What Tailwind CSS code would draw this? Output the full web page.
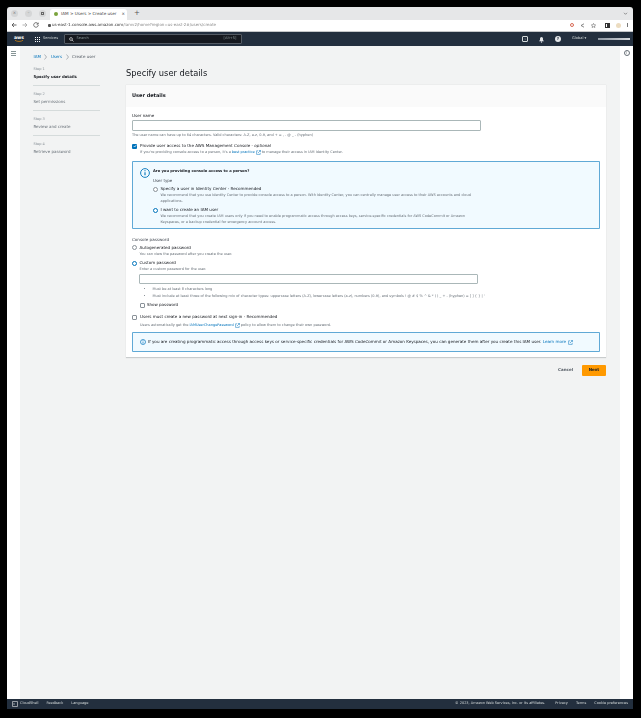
<!DOCTYPE html>
<html><head><meta charset="utf-8"><script src="https://cdn.jsdelivr.net/npm/@tailwindcss/browser@4"></script></head>
<body class="bg-black w-[641px] h-[718px] overflow-hidden font-['DejaVu_Sans',sans-serif]">
<div class="ml-[7px] pt-[7px] w-[626px] h-[709px]">
<div class="w-[626px] h-[702px] flex flex-col rounded-t-[3px] overflow-hidden blur-[0.3px]">
  <!-- tab strip -->
  <div class="h-[12.500px] bg-[#e6e7e8] flex items-center relative shrink-0">
    <div class="flex ml-[4px] gap-[7px] text-[#777] text-[4px] items-center">
      <span class="size-[7px] rounded-full bg-[#d5d6d7] flex items-center justify-center leading-none">×</span>
      <span class="size-[7px] rounded-full bg-[#d5d6d7] flex items-center justify-center leading-none">–</span>
      <span class="size-[7px] rounded-full bg-[#d5d6d7] flex items-center justify-center"><span class="size-[3px] border-[0.5px] border-[#666]"></span></span>
    </div>
    <div class="ml-[4px] w-[77px] h-[10.500px] mt-[2px] bg-white rounded-t-[3px] flex items-center pl-[4px] gap-[3px] text-[4.150px] text-[#444]">
      <span class="size-[4px] rounded-full bg-[#7aa33c] shrink-0"></span><span class="whitespace-nowrap flex-1">IAM &gt; Users &gt; Create user</span><span class="mr-[2px]">×</span>
    </div>
    <span class="ml-[7px] text-[7px] leading-none text-[#555]">+</span>
    <svg class="ml-auto mr-[5px]" width="5" height="5" viewBox="0 0 5 5"><path d="M1 1.800 2.500 3.300 4 1.800" fill="none" stroke="#666" stroke-width=".7"/></svg>
  </div>
  <!-- address bar -->
  <div class="h-[12.500px] bg-white border-b border-[#c5c7c9] flex items-center shrink-0 relative">
    <div class="flex items-center ml-[4px] gap-[5px]">
      <svg width="6" height="6" viewBox="0 0 6 6"><path d="M5.500 3H1M3 1 1 3l2 2" fill="none" stroke="#555" stroke-width=".9"/></svg>
      <svg width="6" height="6" viewBox="0 0 6 6"><path d="M.5 3H5M3 1l2 2-2 2" fill="none" stroke="#aaa" stroke-width=".9"/></svg>
      <svg width="6" height="6" viewBox="0 0 6 6"><path d="M5 1.800A2.300 2.300 0 1 0 5.300 3M5.200.6v1.600H3.600" fill="none" stroke="#555" stroke-width=".8"/></svg>
    </div>
    <span class="ml-[8.500px] size-[3px] rounded-[1px] bg-[#555]"></span>
    <span class="ml-[1.500px] text-[4px] text-[#333] whitespace-nowrap">us-east-1.console.aws.amazon.com<span class="text-[#8a8a8a]">/iamv2/home?region=us-east-2#/users/create</span></span>
    <div class="ml-auto flex items-center mr-[5.500px] gap-[6px]">
      <span class="size-[4px] rounded-full border border-[#d96a55]"></span>
      <svg width="5" height="5" viewBox="0 0 5 5"><path d="M4 .8 1 2.500 4 4.200" fill="none" stroke="#555" stroke-width=".7"/></svg>
      <svg width="5" height="5" viewBox="0 0 10 10"><path d="m5 .8 1.300 2.900 3.100.3-2.400 2 .8 3.100L5 7.500 2.200 9.100 3 6 .6 4l3.100-.3z" fill="none" stroke="#555"/></svg>
      <span class="size-[5px] border border-[#333] border-r-[3px] ml-[3px]"></span>
      <span class="size-[5px] rounded-full bg-[#ecdcc0]"></span>
      <span class="w-[1px] h-[4px] bg-[#777]"></span>
    </div>
  </div>
  <!-- aws nav -->
  <div class="h-[14px] bg-[#232f3e] flex items-center shrink-0 text-white">
    <div class="w-[14px] ml-[5px] flex flex-col items-center text-[4.600px] leading-[4px] font-bold">aws<svg width="10" height="2" viewBox="0 0 10 2" class="-mt-[0.5px]"><path d="M1 .3C3 1.800 7 1.800 9 .3" stroke="#f90" stroke-width=".6" fill="none"/></svg></div>
    <div class="ml-[9px] grid grid-cols-3 gap-[1px] w-[5px]">
      <span class="size-[1px] bg-white"></span><span class="size-[1px] bg-white"></span><span class="size-[1px] bg-white"></span><span class="size-[1px] bg-white"></span><span class="size-[1px] bg-white"></span><span class="size-[1px] bg-white"></span><span class="size-[1px] bg-white"></span><span class="size-[1px] bg-white"></span><span class="size-[1px] bg-white"></span>
    </div>
    <span class="ml-[3px] w-[16px] text-[3.600px] text-[#d5dbdb] whitespace-nowrap">Services</span>
    <div class="ml-[4.500px] w-[178px] h-[10px] bg-[#16191f] border-[0.5px] border-[#545b64] rounded-[1px] flex items-center px-[4px] text-[3.600px] text-[#879596]">
      <svg width="5" height="5" viewBox="0 0 5 5"><circle cx="2" cy="2" r="1.400" fill="none" stroke="#fff" stroke-width=".6"/><path d="m3 3 1.500 1.500" stroke="#fff" stroke-width=".6"/></svg>
      <span class="ml-[3px]">Search</span><span class="ml-auto">[Alt+S]</span>
    </div>
    <div class="ml-auto flex items-center">
      <span class="size-[6px] border border-[#d5dbdb] rounded-[1px] mr-[10px] text-[3px] leading-none flex items-center justify-center">›</span>
      <svg width="7" height="7" viewBox="0 0 7 7" class="mr-[10px]"><path d="M1 5.300h5L5 4V2.600a1.500 1.500 0 0 0-3 0V4z" fill="#e5e7ea"/><circle cx="3.500" cy="6" r=".7" fill="#e5e7ea"/></svg>
      <span class="size-[6px] rounded-full bg-[#e5e7ea] mr-[11px] flex items-center justify-center text-[#232f3e] text-[4px] leading-none font-bold">?</span>
      <span class="w-[16px] text-[3.600px] text-[#d5dbdb] whitespace-nowrap">Global ▾</span>
      <span class="ml-[10px] mr-[3px] w-[32px] h-[1.500px] bg-gradient-to-r from-[#8f98a3] to-[#d8dbdf]"></span>
    </div>
  </div>
  <!-- body -->
  <div class="flex-1 flex min-h-0 bg-[#f2f3f3]">
    <div class="w-[13px] bg-white shrink-0 flex flex-col items-center pt-[5px] gap-[1px]">
      <span class="w-[5px] h-[1px] bg-[#879596]"></span><span class="w-[5px] h-[1px] bg-[#879596]"></span><span class="w-[5px] h-[1px] bg-[#879596]"></span>
    </div>
    <div class="flex-1 min-w-0">
      <!-- breadcrumbs -->
      <div class="h-[10px] mt-[5.500px] ml-[13.500px] flex items-center text-[4px] text-[#545b64]">
        <span class="text-[#0073bb]">IAM</span>
        <svg class="mx-[3.500px]" width="3" height="6" viewBox="0 0 3 6"><path d="m.5.5 2 2.500-2 2.500" fill="none" stroke="#687078" stroke-width=".5"/></svg>
        <span class="text-[#0073bb]">Users</span>
        <svg class="mx-[3.500px]" width="3" height="6" viewBox="0 0 3 6"><path d="m.5.5 2 2.500-2 2.500" fill="none" stroke="#687078" stroke-width=".5"/></svg>
        <span>Create user</span>
      </div>
      <div class="flex ml-[13px]">
        <!-- steps -->
        <div class="w-[67px] mt-[4.500px] shrink-0 text-[4px] text-[#687078]">
          <div class="h-[19.500px] border-b-[0.5px] border-[#d5dbdb]"><div class="text-[3.500px] h-[6px] leading-[6px] text-[#8a9299] pl-[0.5px]">Step 1</div><div class="h-[8px] mt-[1px] leading-[8px] font-bold text-[#16191f] text-[3.900px] whitespace-nowrap pl-[0.5px]">Specify user details</div></div>
          <div class="h-[25px] border-b-[0.5px] border-[#d5dbdb] pt-[5.200px]"><div class="text-[3.500px] h-[6px] leading-[6px] text-[#8a9299] pl-[0.5px]">Step 2</div><div class="h-[8px] mt-[1px] leading-[8px] whitespace-nowrap pl-[0.5px]">Set permissions</div></div>
          <div class="h-[25px] border-b-[0.5px] border-[#d5dbdb] pt-[5.200px]"><div class="text-[3.500px] h-[6px] leading-[6px] text-[#8a9299] pl-[0.5px]">Step 3</div><div class="h-[8px] mt-[1px] leading-[8px] whitespace-nowrap pl-[0.5px]">Review and create</div></div>
          <div class="h-[25px] pt-[5.200px]"><div class="text-[3.500px] h-[6px] leading-[6px] text-[#8a9299] pl-[0.5px]">Step 4</div><div class="h-[8px] mt-[1px] leading-[8px] whitespace-nowrap pl-[0.5px]">Retrieve password</div></div>
        </div>
        <!-- main column -->
        <div class="ml-[26px] w-[480px] shrink-0 mt-[4px]">
          <h1 class="h-[14px] leading-[14px] text-[8.300px] font-normal text-[#16191f] whitespace-nowrap">Specify user details</h1>
          <section class="mt-[5.500px] w-[480px] h-[273px] bg-white border-b border-[#c9cccd] shadow-[0_0_1px_rgba(0,0,0,.15)]">
            <div class="h-[22px] bg-[#fafafa] px-[6px] flex items-center text-[5px] font-bold text-[#16191f]">User details</div>
            <div class="px-[6px] text-[4.100px] text-[#16191f]">
              <div class="h-[6px] mt-[5.500px] leading-[6px]">User name</div>
              <div class="mt-[1.500px] w-[349px] h-[11px] border-[0.5px] border-[#aab7b8] rounded-[1px] bg-white"></div>
              <div class="mt-[1px] h-[6px] leading-[6px] text-[3.500px] text-[#687078] whitespace-nowrap">The user name can have up to 64 characters. Valid characters: A-Z, a-z, 0-9, and + = , . @ _ - (hyphen)</div>
              <div class="mt-[5px] h-[6px] flex items-center gap-[3px] whitespace-nowrap">
                <span class="size-[5px] rounded-[1px] bg-[#0073bb] flex items-center justify-center"><svg width="4" height="4" viewBox="0 0 4 4"><path d="m.7 2 1 1 1.600-2" fill="none" stroke="#fff" stroke-width=".7"/></svg></span>
                <span>Provide user access to the AWS Management Console - <i>optional</i></span>
              </div>
              <div class="ml-[8px] h-[6px] leading-[6px] text-[3.500px] text-[#687078] whitespace-nowrap flex items-center">If you're providing console access to a person, it's a <span class="text-[#0073bb] ml-[1px]">best practice</span>
                <svg class="mx-[1px]" width="5" height="5" viewBox="0 0 5 5"><path d="M2 .8H.6v3.600h3.600V3M2.800.5h1.700v1.700M4.400.6 2 3" fill="none" stroke="#0073bb" stroke-width=".5"/></svg>to manage their access in IAM Identity Center.</div>
              <!-- info box 1 -->
              <div class="mt-[5.500px] w-[468px] h-[68.500px] bg-[#f1faff] border-[0.5px] border-[#0073bb]/60 rounded-[1px] flex">
                <svg class="ml-[7px] mt-[6.800px] shrink-0" width="10" height="10" viewBox="0 0 10 10"><circle cx="5" cy="5" r="4.400" fill="none" stroke="#0073bb" stroke-width=".9"/><path d="M5 4.300v3M5 2.300v1" stroke="#0073bb" stroke-width="1.100"/></svg>
                <div class="ml-[3px]">
                  <div class="mt-[6.800px] h-[6px] leading-[6px] text-[3.700px] font-bold">Are you providing console access to a person?</div>
                  <div class="mt-[4px] h-[6px] leading-[6px] text-[4px] text-[#414750]">User type</div>
                  <div class="mt-[2px] flex gap-[2.500px]">
                    <span class="size-[5px] mt-[0.500px] rounded-full border-[0.5px] border-[#8a9299] bg-white shrink-0"></span>
                    <div><div class="h-[6px] leading-[6px] text-[4.100px] whitespace-nowrap">Specify a user in Identity Center - Recommended</div>
                    <div class="w-[318px] text-[3.500px] leading-[6px] text-[#687078]">We recommend that you use Identity Center to provide console access to a person. With Identity Center, you can centrally manage user access to their AWS accounts and cloud applications.</div></div>
                  </div>
                  <div class="mt-[3px] flex gap-[2.500px]">
                    <span class="size-[5px] mt-[0.500px] rounded-full border-[1.500px] border-[#0073bb] bg-white shrink-0"></span>
                    <div><div class="h-[6px] leading-[6px] text-[4.100px] whitespace-nowrap">I want to create an IAM user</div>
                    <div class="w-[318px] text-[3.500px] leading-[6px] text-[#687078]">We recommend that you create IAM users only if you need to enable programmatic access through access keys, service-specific credentials for AWS CodeCommit or Amazon Keyspaces, or a backup credential for emergency account access.</div></div>
                  </div>
                </div>
              </div>
              <div class="mt-[7.500px] h-[6px] leading-[6px] text-[4.100px] text-[#414750]">Console password</div>
              <div class="mt-[2px] flex gap-[2.500px]">
                <span class="size-[5px] mt-[0.500px] rounded-full border-[0.5px] border-[#8a9299] bg-white shrink-0"></span>
                <div><div class="h-[6px] leading-[6px] text-[4.100px]">Autogenerated password</div><div class="h-[6px] leading-[6px] text-[3.500px] text-[#687078]">You can view the password after you create the user.</div></div>
              </div>
              <div class="mt-[3.500px] flex gap-[2.500px]">
                <span class="size-[5px] mt-[0.500px] rounded-full border-[1.500px] border-[#0073bb] bg-white shrink-0"></span>
                <div class="flex-1"><div class="h-[6px] leading-[6px] text-[4.100px]">Custom password</div><div class="h-[6px] leading-[6px] text-[3.500px] text-[#687078]">Enter a custom password for the user.</div>
                  <div class="mt-[1.500px] -ml-[0.5px] w-[339px] h-[10.500px] border-[0.5px] border-[#aab7b8] rounded-[1px] bg-white"></div>
                  <ul class="mt-[2px] list-disc ml-[13px] text-[3.500px] leading-[7px] text-[#687078] whitespace-nowrap">
                    <li>Must be at least 8 characters long</li>
                    <li>Must include at least three of the following mix of character types: uppercase letters (A-Z), lowercase letters (a-z), numbers (0-9), and symbols ! @ # $ % ^ &amp; * ( ) _ + - (hyphen) = [ ] { } | '</li>
                  </ul>
                  <div class="mt-[2px] h-[6px] flex items-center gap-[2.500px] text-[4px]"><span class="size-[5px] rounded-[1px] border-[0.5px] border-[#8a9299] bg-white"></span>Show password</div>
                </div>
              </div>
              <div class="mt-[6.500px] h-[6px] flex items-center gap-[3px] whitespace-nowrap"><span class="size-[5px] rounded-[1px] border-[0.5px] border-[#8a9299] bg-white"></span>Users must create a new password at next sign-in - Recommended</div>
              <div class="mt-[1.500px] ml-[8px] h-[6px] leading-[6px] text-[3.500px] text-[#687078] whitespace-nowrap flex items-center">Users automatically get the <span class="text-[#0073bb] ml-[1px]">IAMUserChangePassword</span>
                <svg class="mx-[1px]" width="5" height="5" viewBox="0 0 5 5"><path d="M2 .8H.6v3.600h3.600V3M2.800.5h1.700v1.700M4.400.6 2 3" fill="none" stroke="#0073bb" stroke-width=".5"/></svg>policy to allow them to change their own password.</div>
              <!-- info box 2 -->
              <div class="mt-[4px] w-[468px] h-[20px] bg-[#f1faff] border-[0.5px] border-[#0073bb]/60 rounded-[1px] flex items-center pl-[6.500px] text-[4.100px] whitespace-nowrap">
                <svg width="6" height="6" viewBox="0 0 6 6" class="mr-[2.500px] shrink-0"><circle cx="3" cy="3" r="2.500" fill="none" stroke="#0073bb" stroke-width=".7"/><path d="M3 2.600v2M3 1.300v.8" stroke="#0073bb" stroke-width=".7"/></svg>
                <span>If you are creating programmatic access through access keys or service-specific credentials for AWS CodeCommit or Amazon Keyspaces, you can generate them after you create this IAM user.</span>
                <span class="text-[#0073bb] ml-[1.500px]">Learn more</span>
                <svg class="ml-[1.500px]" width="5" height="5" viewBox="0 0 5 5"><path d="M2 .8H.6v3.600h3.600V3M2.800.5h1.700v1.700M4.400.6 2 3" fill="none" stroke="#0073bb" stroke-width=".5"/></svg>
              </div>
            </div>
          </section>
          <div class="mt-[7px] flex items-center justify-end">
            <span class="text-[4px] font-bold text-[#545b64] mr-[9px]">Cancel</span>
            <span class="w-[24px] h-[10.500px] bg-[#ff9900] rounded-[1px] flex items-center justify-center text-[4px] font-bold text-[#16191f]">Next</span>
          </div>
        </div>
      </div>
    </div>
    <div class="w-[13px] bg-white shrink-0 flex justify-center pt-[4px]">
      <span class="size-[6px] rounded-full border-[0.5px] border-[#687078] text-[#687078] text-[4px] leading-none flex items-center justify-center">i</span>
    </div>
  </div>
  <!-- footer -->
  <div class="h-[10px] bg-[#232f3e] shrink-0 flex items-center text-[#d5dbdb] text-[3.500px] whitespace-nowrap">
    <svg class="ml-[5px]" width="6" height="6" viewBox="0 0 6 6"><rect x=".4" y=".4" width="5.200" height="5.200" rx=".6" fill="none" stroke="#fff" stroke-width=".6"/><path d="m1.500 2 1 1-1 1" fill="none" stroke="#fff" stroke-width=".5"/></svg>
    <span class="ml-[2px]">CloudShell</span><span class="ml-[8px]">Feedback</span><span class="ml-[8px]">Language</span>
    <span class="ml-auto">© 2023, Amazon Web Services, Inc. or its affiliates.</span><span class="ml-[10px]">Privacy</span><span class="ml-[8px]">Terms</span><span class="ml-[8px] mr-[5px]">Cookie preferences</span>
  </div>
</div>
</div>
</body></html>
